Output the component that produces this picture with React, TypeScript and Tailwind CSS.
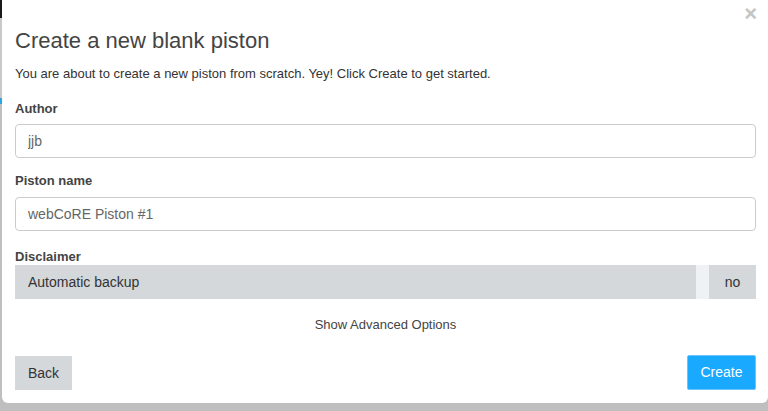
export default function App() {
  return (
    <div className="w-[768px] h-[411px] bg-[#bfbfbf] flex overflow-hidden font-['Liberation_Sans',Arial,sans-serif]">
      <div className="w-[2px] flex flex-col">
        <div className="h-[18px] bg-[#1a1a1a]" />
        <div className="h-[80px] bg-[#c8c8c8]" />
        <div className="h-[6px] bg-[#2aa6e0]" />
      </div>
      <div className="relative w-[766px] h-[403px] bg-white rounded-b-[6px] pl-[13px] pr-[12px]">
        <button className="absolute right-[11px] top-[3px] text-[22px] font-bold leading-none text-[#c4c4c4]">×</button>
        <h4 className="pt-[29px] text-[22px] leading-[24px] text-[#444]">Create a new blank piston</h4>
        <p className="mt-[12px] text-[13px] leading-[18px] text-[#333]">
          You are about to create a new piston from scratch. Yey! Click Create to get started.
        </p>
        <label className="block mt-[17px] text-[13px] leading-[18px] font-bold text-[#444]">Author</label>
        <input
          className="mt-[6px] block w-full h-[34px] border border-[#ccc] rounded-[4px] px-[12px] text-[14px] text-[#666] outline-none"
          defaultValue="jjb"
        />
        <label className="block mt-[14px] text-[13px] leading-[18px] font-bold text-[#444]">Piston name</label>
        <input
          className="mt-[7px] block w-full h-[34px] border border-[#ccc] rounded-[4px] px-[12px] text-[14px] text-[#666] outline-none"
          defaultValue="webCoRE Piston #1"
        />
        <label className="block mt-[17px] text-[13px] leading-[17px] font-bold text-[#444]">Disclaimer</label>
        <div className="flex h-[34px] bg-[#d4d8da] items-stretch text-[14px] text-[#333]">
          <div className="flex-1 flex items-center pl-[13px]">Automatic backup</div>
          <div className="w-[13px] bg-[#eef2f5]" />
          <div className="w-[47px] flex items-center justify-center">no</div>
        </div>
        <div className="mt-[17px] text-center text-[13px] leading-[18px] text-[#444]">Show Advanced Options</div>
        <div className="mt-[21px] flex justify-between items-end">
          <button className="h-[34px] w-[57px] bg-[#d4d8da] text-[14px] text-[#333]">Back</button>
          <button className="h-[35px] w-[69px] bg-[#19a9ff] border border-[#6cc4ff] rounded-[2px] text-[14px] text-white">Create</button>
        </div>
      </div>
    </div>
  );
}
